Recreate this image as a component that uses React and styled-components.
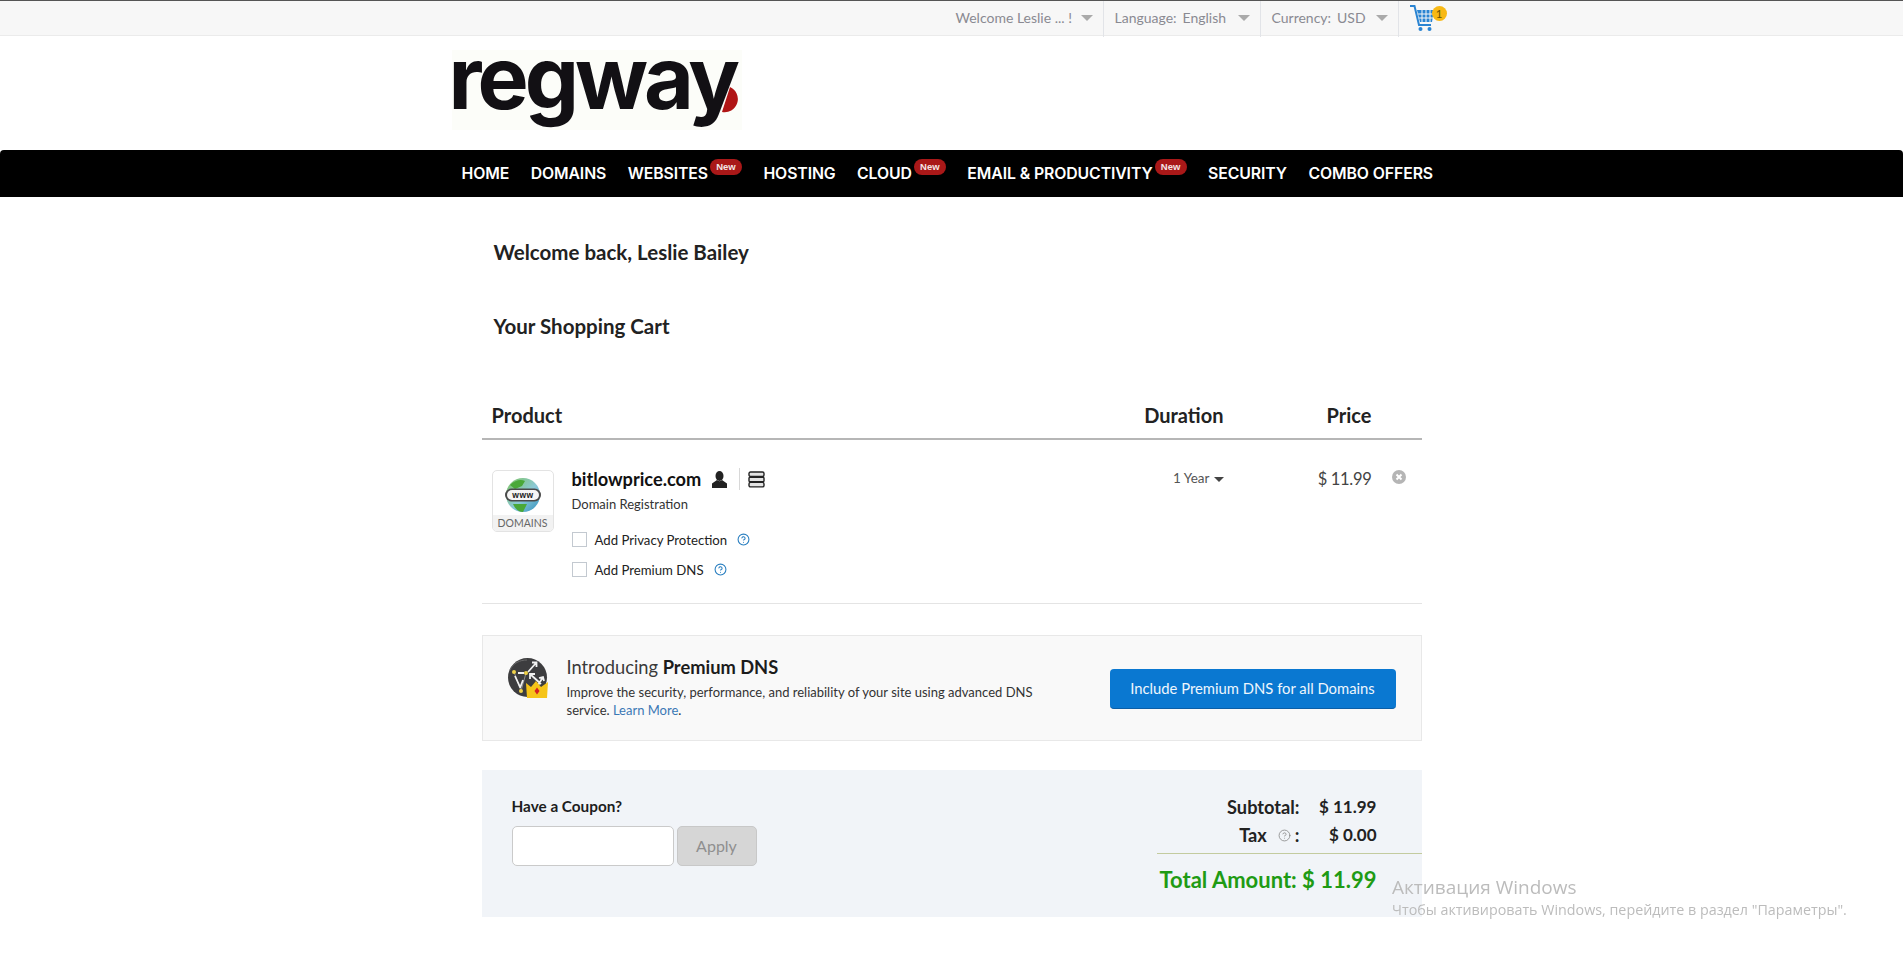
import React from 'react'
import styled, { createGlobalStyle } from 'styled-components'
import { CircleHelp } from 'lucide-react'

const GlobalStyle = createGlobalStyle`
html, body { margin:0; padding:0; background:#fff; }
body { font-family:"Lato","Open Sans",sans-serif; color:#1f1f1f; }
* { box-sizing:border-box; }
`

const Page = styled.div`
display:flex;
flex-direction:column;
min-height:954px;
overflow:hidden;
`

const TopBar = styled.div`
height:36px;
background:#f7f7f7;
border-top:1px solid #555;
border-bottom:1px solid #ebebeb;
`

const Wrap = styled.div`
width:1000px;
margin:0 auto;
display:flex;
`

const TopMenu = styled(Wrap)`
justify-content:flex-end;
height:35px;
`

const TopItem = styled.div`
display:flex;
align-items:center;
justify-content:space-between;
width:${({$width})=>$width}px;
height:36px;
padding:0 10px 4px 11px;
border-right:1px solid #e2e4e8;
font-size:14px;
color:#8a8a92;
white-space:nowrap;
`

const TopValue = styled.span`
margin-left:6px;
`

const Caret = styled.span`
width:0;
height:0;
margin-top:2px;
border-left:6px solid transparent;
border-right:6px solid transparent;
border-top:6px solid #aaa;
`

const CartBox = styled.div`
position:relative;
width:53px;
padding:4px 0 0 11px;
`

const CartBadge = styled.span`
position:absolute;
top:5px;
left:33px;
width:15px;
height:15px;
border-radius:50%;
background:#f8b915;
color:#6b5200;
font-size:11.5px;
line-height:15px;
text-align:center;
`

const LogoRow = styled(Wrap)`
height:114px;
padding-top:14px;
`

const Logo = styled.div`
position:relative;
width:290px;
height:80px;
background:#fcfdf9;
font-family:"Inter",sans-serif;
font-weight:700;
font-size:86px;
line-height:80px;
letter-spacing:-4px;
color:#121014;
`

const LogoText = styled.span`
display:block;
height:70px;
margin:-12px 0 0 -3px;
`

const LogoDot = styled.svg`
position:absolute;
left:266px;
top:36px;
`

const Nav = styled.div`
height:47px;
background:#000;
border-radius:4px 4px 0 0;
`

const NavList = styled(Wrap)`
height:47px;
align-items:center;
padding:0 0 1px 10px;
gap:21.5px;
`

const NavItem = styled.div`
display:flex;
align-items:center;
gap:2px;
font-family:"Inter",sans-serif;
font-size:15.8px;
font-weight:600;
letter-spacing:-0.1px;
color:#fff;
white-space:nowrap;
`

const NewBadge = styled.span`
width:32px;
height:16px;
margin-top:-12px;
border-radius:8px;
background:#a91818;
color:#f4e6e6;
font-family:"Liberation Sans",sans-serif;
font-size:9.5px;
font-weight:700;
line-height:15px;
text-align:center;
letter-spacing:0;
`

const Main = styled.div`
width:940px;
margin:0 auto;
padding-top:43px;
`

const Heading = styled.div`
margin:0 0 50px 12px;
font-size:20.5px;
font-weight:700;
line-height:24px;
color:#222;
`

const CartGrid = styled.div`
display:grid;
grid-template-columns:1fr 101px 148px 50px;
`

const HeadRow = styled(CartGrid)`
margin-top:65px;
padding:0 0 11px 10px;
border-bottom:2px solid #b6b6b6;
`

const HeadCell = styled.div`
font-size:20px;
font-weight:700;
line-height:24px;
color:#222;
text-align:${({$right})=>$right ? 'right' : 'left'};
white-space:nowrap;
`

const ItemRow = styled(CartGrid)`
padding:30px 0 26px 10px;
border-bottom:1px solid #e4e4e4;
`

const Product = styled.div`
display:flex;
gap:18px;
`

const ProductBox = styled.div`
width:62px;
height:62px;
border:1px solid #e3e3e3;
border-radius:5px;
overflow:hidden;
display:flex;
flex-direction:column;
`

const ProductArt = styled.div`
flex:1;
display:flex;
align-items:center;
justify-content:center;
padding-top:3px;
`

const ProductTag = styled.div`
height:16px;
background:#f2f2f2;
color:#666;
font-size:10.5px;
line-height:16px;
text-align:center;
`

const Info = styled.div`
display:flex;
flex-direction:column;
`

const NameRow = styled.div`
display:flex;
align-items:center;
height:22px;
margin-top:-2px;
`

const Name = styled.span`
font-size:18.2px;
font-weight:700;
color:#111;
margin-right:10px;
`

const IconSep = styled.span`
width:1px;
height:22px;
margin:0 8px 0 11px;
background:#d8d8d8;
`

const SubText = styled.div`
margin-top:6px;
font-size:13px;
line-height:16px;
color:#333;
`

const Addon = styled.label`
display:flex;
align-items:center;
height:15px;
margin-top:${({$top})=>$top}px;
font-size:13.2px;
color:#222;
`

const Check = styled.span`
width:15px;
height:15px;
margin-right:8px;
border:1px solid #c3c9d0;
background:#fff;
`

const HelpWrap = styled.span`
display:flex;
margin-left:10px;
color:${({$color})=>$color || '#2a7fc0'};
`

const Duration = styled.div`
display:flex;
align-items:center;
justify-content:flex-end;
gap:4px;
height:18px;
margin-top:-1px;
font-size:13.5px;
color:#555;
`

const DurationCaret = styled.span`
width:0;
height:0;
margin-top:3px;
border-left:5px solid transparent;
border-right:5px solid transparent;
border-top:5px solid #444;
`

const Price = styled.div`
height:20px;
margin-top:-1px;
font-size:16.5px;
letter-spacing:-0.3px;
line-height:20px;
color:#444;
text-align:right;
`

const Remove = styled.div`
margin-top:-2px;
padding-left:20px;
`

const Promo = styled.div`
display:flex;
justify-content:space-between;
align-items:center;
height:106px;
margin-top:31px;
padding:0 25px;
background:#f9f9f9;
border:1px solid #e8e8e8;
`

const PromoLeft = styled.div`
display:flex;
gap:18px;
align-self:flex-start;
padding-top:20px;
`

const PromoIcon = styled.svg`
margin-top:2px;
`

const PromoTitle = styled.div`
font-size:18.3px;
line-height:22px;
color:#3a3a3a;
`

const PromoStrong = styled.strong`
font-weight:700;
color:#1c1c1c;
`

const PromoDesc = styled.div`
width:478px;
margin-top:5px;
font-size:13px;
line-height:18px;
color:#333;
`

const LearnMore = styled.a`
color:#3b78b5;
`

const BlueButton = styled.button`
width:286px;
height:40px;
margin-top:1px;
border:0;
border-bottom:1px solid #0b5ea6;
border-radius:4px;
background:#0a78d1;
color:#eef6fd;
font-family:inherit;
font-size:14.8px;
`

const Summary = styled.div`
display:flex;
justify-content:space-between;
height:147px;
margin-top:29px;
padding-left:30px;
background:#f1f4f8;
`

const Coupon = styled.div`
padding-top:26px;
`

const CouponLabel = styled.div`
font-size:15.3px;
font-weight:700;
line-height:20px;
color:#1d1d1d;
`

const CouponRow = styled.div`
display:flex;
gap:3px;
margin-top:10px;
`

const CouponInput = styled.input`
width:162px;
height:40px;
border:1px solid #cacaca;
border-radius:5px;
background:#fff;
`

const ApplyButton = styled.button`
width:80px;
height:40px;
padding-bottom:2px;
border:1px solid #c8c8c8;
border-radius:5px;
background:#d6d6d6;
color:#8f8f8f;
font-family:inherit;
font-size:16px;
`

const Totals = styled.div`
width:265px;
padding-top:23px;
`

const TotalLine = styled.div`
display:grid;
grid-template-columns:143px 77px;
height:28px;
font-size:18.2px;
font-weight:700;
line-height:28px;
color:#222;
`

const TotalLabel = styled.span`
display:flex;
align-items:center;
justify-content:flex-end;
`

const TotalValue = styled.span`
font-size:17px;
text-align:right;
`

const TaxHelp = styled(HelpWrap)`
margin:0 4px 0 11px;
`

const GrandTotal = styled.div`
margin-top:4px;
padding-top:12px;
border-top:1px solid #c3cb9f;
width:265px;
padding-right:45px;
font-size:22px;
font-weight:700;
line-height:28px;
color:#1f9b14;
text-align:right;
white-space:nowrap;
`

const Watermark = styled.div`
position:fixed;
right:45px;
top:875px;
width:466px;
font-family:"Open Sans",sans-serif;
color:#bcbcbc;
pointer-events:none;
`

const WatermarkTitle = styled.div`
font-size:19px;
line-height:24px;
`

const WatermarkText = styled.div`
font-size:14.3px;
line-height:22px;
white-space:nowrap;
`

const CartIcon = () => (
  <svg width="26" height="26" viewBox="0 0 26 26" fill="none">
    <path d="M0 1h4.500l4.500 19h12" stroke="#2a84d2" strokeWidth="2" />
    <path d="M7 5h17l-2 12H10z" fill="#2a84d2" />
    <path d="M8 9h15.500M9 13h14M12 5v12M16 5v12M20 5v12" stroke="#f7f7f7" strokeWidth="1" />
    <circle cx="10.500" cy="24" r="2" fill="#2a84d2" />
    <circle cx="19.500" cy="24" r="2" fill="#2a84d2" />
  </svg>
)

const GlobeIcon = () => (
  <svg width="36" height="36" viewBox="0 0 36 36">
    <defs>
      <linearGradient id="globe" x1="0" y1="0" x2="1" y2="1">
        <stop offset="0" stopColor="#7cc35a" />
        <stop offset="0.55" stopColor="#8cc9d8" />
        <stop offset="1" stopColor="#2f8fbd" />
      </linearGradient>
    </defs>
    <circle cx="18" cy="18" r="17" fill="url(#globe)" />
    <path d="M5 8c5-5 11-6 15-4l-3 5-7 3zM8 27h14l-4 8c-4 0-8-3-10-8z" fill="#4aa838" />
    <rect x="0" y="11.500" width="36" height="13" rx="6.500" fill="#4a4a4a" />
    <rect x="2" y="13" width="32" height="10" rx="5" fill="#f6f6f6" />
    <text x="18" y="21" textAnchor="middle" fontFamily="Liberation Sans" fontSize="8.500" fontWeight="700" letterSpacing="0.5" fill="#222">www</text>
  </svg>
)

const PersonIcon = () => (
  <svg width="17" height="17" viewBox="0 0 17 17">
    <ellipse cx="8.5" cy="5" rx="4" ry="5" fill="#222" />
    <path d="M6 9l-5 3.5V17h15v-4.500L11 9c-1.500 1.500-3.500 1.500-5 0z" fill="#222" />
  </svg>
)

const ServerIcon = () => (
  <svg width="17" height="17" viewBox="0 0 17 17" fill="#e4e4e4" stroke="#222" strokeWidth="1.400">
    <rect x="1" y="1" width="15" height="4.500" rx="1.500" />
    <rect x="1" y="6.200" width="15" height="4.500" rx="1" />
    <rect x="1" y="11.400" width="15" height="4.500" rx="1.500" />
  </svg>
)

const RemoveIcon = () => (
  <svg width="14" height="14" viewBox="0 0 14 14">
    <circle cx="7" cy="7" r="7" fill="#b5b5b5" />
    <path d="M4.500 4.500l5 5M9.500 4.500l-5 5" stroke="#fff" strokeWidth="2" />
  </svg>
)

const DnsIcon = () => (
  <PromoIcon width="41" height="41" viewBox="0 0 41 41">
    <circle cx="19.500" cy="19.500" r="19.500" fill="#3d3d3f" />
    <path d="M2 12c3-7 10-10 17-10" stroke="#6a6a6a" strokeWidth="1" fill="none" />
    <path d="M6 14l7 19M13 33l5-18" stroke="#8d8d8d" strokeWidth="1" fill="none" />
    <path d="M20 14l8-9M24 4.500h4.500V9M33 26L22 16M22 21v-5h5M30 27l5-8M31 20l4-1 1 4M10 15h6M7 18l5 11M12 30l3-8" stroke="#f1f1f1" strokeWidth="1.800" fill="none" />
    <circle cx="6" cy="14" r="2" fill="#f0d24a" />
    <circle cx="18" cy="15" r="2" fill="#f0d24a" />
    <circle cx="13" cy="33" r="2" fill="#f0d24a" />
    <path d="M19 40l-1-15 5 4 5-6 5 6 7-5-1 16z" fill="#f6c419" />
    <path d="M29 29.500l2.500 3.500-2.500 3.500-2.500-3.500z" fill="#d42020" />
  </PromoIcon>
)

const navItems = [
  { label: 'HOME' },
  { label: 'DOMAINS' },
  { label: 'WEBSITES', isNew: true },
  { label: 'HOSTING' },
  { label: 'CLOUD', isNew: true },
  { label: 'EMAIL & PRODUCTIVITY', isNew: true },
  { label: 'SECURITY' },
  { label: 'COMBO OFFERS' },
]

const App = () => {
  return (
    <Page>
      <GlobalStyle />
      <TopBar>
        <TopMenu>
          <TopItem $width={159}>
            Welcome Leslie ... !
            <Caret />
          </TopItem>
          <TopItem $width={157}>
            <span>Language:<TopValue>English</TopValue></span>
            <Caret />
          </TopItem>
          <TopItem $width={138}>
            <span>Currency:<TopValue>USD</TopValue></span>
            <Caret />
          </TopItem>
          <CartBox>
            <CartIcon />
            <CartBadge>1</CartBadge>
          </CartBox>
        </TopMenu>
      </TopBar>
      <LogoRow>
        <Logo>
          <LogoText>regway</LogoText>
          <LogoDot width="24" height="27" viewBox="0 0 24 27">
            <path d="M12 1A13.200 13.200 0 0 1 4 26z" fill="#b01515" />
          </LogoDot>
        </Logo>
      </LogoRow>
      <Nav>
        <NavList>
          {navItems.map((item) => (
            <NavItem key={item.label}>
              {item.label}
              {item.isNew && <NewBadge>New</NewBadge>}
            </NavItem>
          ))}
        </NavList>
      </Nav>
      <Main>
        <Heading>Welcome back, Leslie Bailey</Heading>
        <Heading>Your Shopping Cart</Heading>
        <HeadRow>
          <HeadCell>Product</HeadCell>
          <HeadCell $right>Duration</HeadCell>
          <HeadCell $right>Price</HeadCell>
        </HeadRow>
        <ItemRow>
          <Product>
            <ProductBox>
              <ProductArt><GlobeIcon /></ProductArt>
              <ProductTag>DOMAINS</ProductTag>
            </ProductBox>
            <Info>
              <NameRow>
                <Name>bitlowprice.com</Name>
                <PersonIcon />
                <IconSep />
                <ServerIcon />
              </NameRow>
              <SubText>Domain Registration</SubText>
              <Addon $top={20}>
                <Check />
                Add Privacy Protection
                <HelpWrap><CircleHelp size={13} /></HelpWrap>
              </Addon>
              <Addon $top={15}>
                <Check />
                Add Premium DNS
                <HelpWrap><CircleHelp size={13} /></HelpWrap>
              </Addon>
            </Info>
          </Product>
          <Duration>1 Year <DurationCaret /></Duration>
          <Price>$ 11.99</Price>
          <Remove><RemoveIcon /></Remove>
        </ItemRow>
        <Promo>
          <PromoLeft>
            <DnsIcon />
            <div>
              <PromoTitle>Introducing <PromoStrong>Premium DNS</PromoStrong></PromoTitle>
              <PromoDesc>
                Improve the security, performance, and reliability of your site using advanced DNS service. <LearnMore>Learn More</LearnMore>.
              </PromoDesc>
            </div>
          </PromoLeft>
          <BlueButton>Include Premium DNS for all Domains</BlueButton>
        </Promo>
        <Summary>
          <Coupon>
            <CouponLabel>Have a Coupon?</CouponLabel>
            <CouponRow>
              <CouponInput />
              <ApplyButton>Apply</ApplyButton>
            </CouponRow>
          </Coupon>
          <Totals>
            <TotalLine>
              <TotalLabel>Subtotal:</TotalLabel>
              <TotalValue>$ 11.99</TotalValue>
            </TotalLine>
            <TotalLine>
              <TotalLabel>Tax<TaxHelp $color="#888"><CircleHelp size={13} strokeWidth={1.5} /></TaxHelp>:</TotalLabel>
              <TotalValue>$ 0.00</TotalValue>
            </TotalLine>
            <GrandTotal>Total Amount: $ 11.99</GrandTotal>
          </Totals>
        </Summary>
      </Main>
      <Watermark>
        <WatermarkTitle>Активация Windows</WatermarkTitle>
        <WatermarkText>Чтобы активировать Windows, перейдите в раздел "Параметры".</WatermarkText>
      </Watermark>
    </Page>
  )
}

export default App
